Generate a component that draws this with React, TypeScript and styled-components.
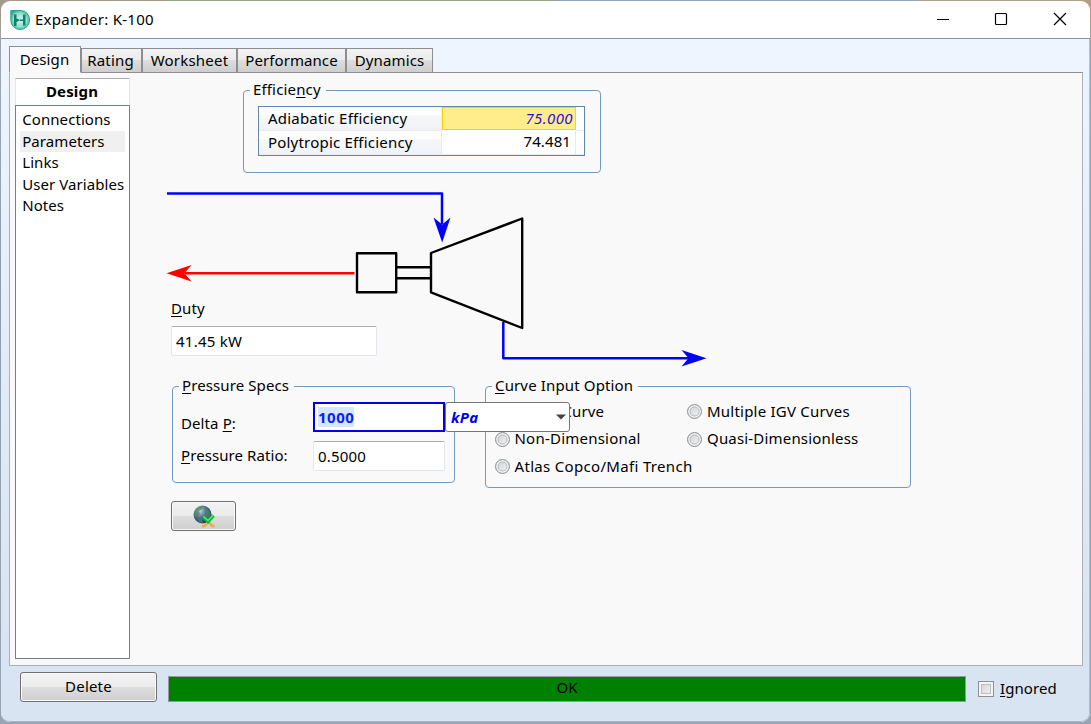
import React from "react";
import styled, { createGlobalStyle } from "styled-components";

const Global = createGlobalStyle`
  *, *::before, *::after { box-sizing: border-box; }
  html, body { margin: 0; padding: 0; overflow: hidden; }
  body { font-family: "Noto Sans", "Open Sans", sans-serif; font-size: 15px; line-height: 22px; color: #000; }
  u { text-underline-offset: 2px; text-decoration-thickness: 1px; text-decoration-skip-ink: none; }
`;

const Desktop = styled.div`
  width: 1091px;
  height: 724px;
  padding: 1px 1px 2px 1px;
  background:
    linear-gradient(90deg, #a39a8c 0 170px, #93a68c 170px 558px, #8fa6bd 558px 917px, #b3a08c 917px) top / 100% 20px no-repeat,
    linear-gradient(#a49a85 0, #9ba6b8 60px, #8f9cb0 300px, #98a4b4 100%);
`;

const Window = styled.div`
  display: flex;
  flex-direction: column;
  height: 721px;
  border-radius: 9px;
  overflow: hidden;
  background: #fff;
`;

const TitleBar = styled.header`
  display: flex;
  align-items: center;
  height: 38px;
  flex: none;
  padding: 0 22px 1px 9px;
  border-bottom: 1px solid #8b96a5;
  > svg { margin-top: 1px; }
`;

const Text = styled.span<{ $ls?: number }>`
  letter-spacing: ${(p) => p.$ls ?? 0}px;
  white-space: nowrap;
`;

const Title = styled(Text)`
  flex: 1;
  margin-left: 5px;
  padding-bottom: 1px;
`;

const WindowButtons = styled.div`
  display: flex;
  gap: 44px;
  svg { display: block; }
`;

const Body = styled.div`
  flex: 1;
  display: flex;
  flex-direction: column;
  padding: 6px 7px 0 8px;
  border-right: 1px solid #b4bfcc;
  border-bottom: 1px solid #aab6c5;
  border-radius: 0 0 9px 9px;
  background: linear-gradient(#eef5fe, #d8e4f1 90%);
`;

const Tabs = styled.nav`
  display: flex;
  align-items: flex-end;
  height: 28px;
  margin-bottom: -1px;
  z-index: 1;
`;

const Tab = styled.div<{ $w: number; $active?: boolean }>`
  width: ${(p) => p.$w}px;
  height: ${(p) => (p.$active ? 27 : 25)}px;
  flex: none;
  display: flex;
  justify-content: center;
  align-items: center;
  padding-bottom: ${(p) => (p.$active ? 2 : 1)}px;
  border: 1px solid #8c8e94;
  border-bottom-color: ${(p) => (p.$active ? "#f9f9f9" : "#8c8e94")};
  background: ${(p) =>
    p.$active ? "#f9f9f9" : "linear-gradient(#f2f2f2, #ebebeb 50%, #dddddd 50%, #cecece)"};
  &:nth-child(1) { padding-right: 1px; }
  &:nth-child(2) { padding-right: 2px; }
`;

const Panel = styled.main`
  display: flex;
  width: 1074px;
  height: 594px;
  flex: none;
  padding: 5px 0 0 5px;
  border: 1px solid #a9b0b9;
  border-top-color: #8c8e94;
  background: #f9f9f9;
`;

const Sidebar = styled.aside`
  width: 115px;
  height: 581px;
  display: flex;
  flex-direction: column;
`;

const SideHead = styled.div`
  height: 27px;
  padding: 1px 1px 0 0;
  text-align: center;
  font-weight: 700;
  letter-spacing: 0.15px;
  background: #fff;
  border: 1px solid #e2e6ed;
  border-top-color: #abadb3;
  border-bottom: 0;
`;

const SideList = styled.div`
  flex: 1;
  padding: 3px 4px;
  background: #fff;
  border: 1px solid #6d8096;
`;

const SideItem = styled.div<{ $on?: boolean }>`
  height: 21.5px;
  line-height: 20px;
  padding-left: 2.2px;
  white-space: nowrap;
  letter-spacing: 0.08px;
  background: ${(p) => (p.$on ? "#f0f0f0" : "transparent")};
`;

const Content = styled.section`
  flex: 1;
  padding: 1px 0 0 36px;
`;

const Group = styled.fieldset<{ $w: number; $h: number }>`
  width: ${(p) => p.$w}px;
  height: ${(p) => p.$h}px;
  min-width: 0;
  margin: 0;
  padding: 0 0 0 7px;
  border: 1px solid #7399bf;
  border-radius: 4px;
  legend {
    height: 22px;
    line-height: 20px;
    padding: 0 5px 0 3px;
    margin-left: -1px;
    white-space: nowrap;
  }
`;

const EfficiencyGroup = styled(Group)`
  margin-left: 77px;
`;

const Grid = styled.div`
  width: 327px;
  height: 50px;
  margin: 5px 0 0 7px;
  display: grid;
  grid-template-columns: 183px 134px 1fr;
  grid-template-rows: 24px 24px;
  border: 1px solid #5f87ae;
  background: #fff;
`;

const Cell = styled.div<{ $kind: "label" | "spec" | "value" | "rest" }>`
  border-right: ${(p) => (p.$kind === "spec" || p.$kind === "rest" ? 0 : "1px solid #e9e9ee")};
  border-bottom: 1px solid #ececf0;
  line-height: 22px;
  white-space: nowrap;
  ${(p) => p.$kind === "label" && "padding-left: 9px; background: linear-gradient(#fff 0 35%, #f7f8fa 36%, #f1f2f5);"}
  ${(p) => p.$kind === "value" && "text-align: right; padding-right: 4px; line-height: 20px;"}
  ${(p) =>
    p.$kind === "spec" &&
    "height: 23px; border: 1px solid #ffd400; background: #ffec8b; color: #2a10e0; font-style: italic; text-align: right; padding-right: 2px; line-height: 21px;"}
`;

const Stage = styled.div`
  display: grid;
  height: 202px;
  svg, > div { grid-area: 1 / 1; }
`;

const Duty = styled.div`
  align-self: end;
  justify-self: start;
  margin: 0 0 19px 5px;
  display: flex;
  flex-direction: column;
  gap: 7px;
`;

const Field = styled.div<{ $w: number }>`
  width: ${(p) => p.$w}px;
  height: 30px;
  padding-left: 4px;
  line-height: 29px;
  background: #fff;
  border: 1px solid #e2e6ed;
  border-top-color: #abadb3;
  border-radius: 2px;
`;

const FocusField = styled(Field)`
  border: 1px solid #0000dd;
  outline: 1px solid #0000ee;
  outline-offset: -2px;
  border-radius: 0;
  color: #0a1eff;
  font-weight: 700;
  letter-spacing: 0.5px;
  flex: none;
  display: flex;
  align-items: center;
  line-height: 20px;
`;

const Selected = styled.span`
  background: #d3e8fc;
`;

const Groups = styled.div`
  display: flex;
  gap: 30px;
  padding-left: 6px;
`;

const SpecRow = styled.div<{ $top: number }>`
  display: flex;
  align-items: center;
  height: 30px;
  margin-top: ${(p) => p.$top}px;
`;

const SpecLabel = styled.label<{ $drop?: number }>`
  width: 133px;
  flex: none;
  white-space: nowrap;
  padding: ${(p) => p.$drop ?? 0}px 0 2px 1px;
`;

const UnitBox = styled.div`
  position: relative;
  z-index: 2;
  width: 125px;
  height: 30px;
  flex: none;
  display: flex;
  align-items: center;
  justify-content: space-between;
  padding: 0 3px 0 5px;
  background: #fff;
  border: 1px solid #777;
  border-radius: 3px;
  color: #0000f0;
  font-weight: 700;
  font-style: italic;
`;

const Radios = styled.div`
  display: grid;
  grid-template-columns: 192.5px 1fr;
  grid-auto-rows: 27.5px;
  align-items: center;
  padding: 1px 0 0 1.5px;
`;

const Radio = styled.div`
  display: flex;
  align-items: center;
  gap: 5px;
  white-space: nowrap;
  ${Text} { padding-bottom: 2px; }
  &::before {
    content: "";
    flex: none;
    width: 15px;
    height: 15px;
    border-radius: 50%;
    border: 1px solid #8e8f8f;
    background: linear-gradient(135deg, #cbcfd5, #f6f6f6);
    box-shadow: inset 0 0 0 1.5px #f4f4f4, inset 0 0 0 2.5px #b4b8bd;
  }
`;

const Button = styled.button<{ $w: number }>`
  width: ${(p) => p.$w}px;
  height: 30px;
  flex: none;
  padding: 0;
  display: flex;
  align-items: center;
  justify-content: center;
  font: inherit;
  color: #000;
  border: 1px solid #707070;
  border-radius: 3px;
  box-shadow: inset 0 0 0 1px #fafafa;
  background: linear-gradient(#f2f2f2, #ebebeb 50%, #dddddd 50%, #cfcfcf);
  ${Text} { padding-bottom: 2px; }
`;

const WebButton = styled(Button)`
  margin: 13px 0 0 5px;
`;

const Footer = styled.footer`
  display: flex;
  padding: 6px 0 0 11px;
`;

const Status = styled.div`
  width: 798px;
  height: 26px;
  margin: 4px 12px 0 11px;
  text-align: center;
  line-height: 21px;
  background: #008000;
  border: 1px solid #8e9c9c;
`;

const Check = styled.label`
  display: flex;
  align-items: center;
  gap: 6px;
  height: 34px;
  ${Text} { padding-bottom: 2px; }
  &::before {
    content: "";
    flex: none;
    width: 16px;
    height: 16px;
    border: 1px solid #8e8f8f;
    background: linear-gradient(135deg, #cbcfd5, #f6f6f6);
    box-shadow: inset 0 0 0 2px #f4f4f4, inset 0 0 0 3px #bcc0c6;
  }
`;

const Logo = () => (
  <svg width="20" height="20" viewBox="0 0 20 20">
    <defs>
      <radialGradient id="logo" cx=".5" cy=".5" r=".55">
        <stop offset="0" stopColor="#d2f8ee" />
        <stop offset=".65" stopColor="#8fdfcb" />
        <stop offset="1" stopColor="#35b198" />
      </radialGradient>
    </defs>
    <path d="M.8.5H11A9 9 0 0 1 19.500 10A9.300 9.300 0 0 1 10 19.500A9.300 9.300 0 0 1 .8 10Z" fill="url(#logo)" stroke="#23a58b" />
    <path d="M4 4.500h2.500v4l4 1.500-4 2v4H4ZM13 4.500h2.500v11H13v-4.500h-3v-1.500h3Z" fill="#11806e" />
  </svg>
);

const Globe = () => (
  <svg width="22" height="23" viewBox="0 0 22 23">
    <defs>
      <radialGradient id="globe" cx=".35" cy=".3" r=".75">
        <stop offset="0" stopColor="#c3d2e6" />
        <stop offset=".5" stopColor="#4d6a9f" />
        <stop offset="1" stopColor="#1c3060" />
      </radialGradient>
    </defs>
    <circle cx="9.500" cy="9.500" r="9" fill="url(#globe)" />
    <path d="M2 6C4 2 7 1 10 1L9 4 6 6 7 9 4 12 1 10ZM12 3l4 2 2 5-3 4-3-3 1-3-2-2ZM5 13l4 1 1 4-4-1Z" fill="#4b8b48" opacity=".7" />
    <path d="M9 21.500l3-.8 3.500-4 3.500 4 2.500.8" fill="none" stroke="#e5af43" strokeWidth="2.600" />
    <path d="M10 11.500l5 5 5.500-6" fill="none" stroke="#08b93b" strokeWidth="3.400" />
    <path d="M10.500 11.500l4.500 4 5-5" fill="none" stroke="#5cf27c" strokeWidth="1.100" />
  </svg>
);

const Diagram = () => (
  <svg width="560" height="202" viewBox="166 173 560 202" fill="none" strokeLinejoin="round">
    <g stroke="#0000ff" strokeWidth="2.500">
      <path d="M167 193.500H442V224" />
      <path d="M503.300 322V358.300H690" />
    </g>
    <path d="M433.500 217.500L442.200 224.500L450.500 217.500L442.200 242.500Z" fill="#00f" />
    <path d="M681.500 350L706.500 358.300L681.500 366.500L688.500 358.300Z" fill="#00f" />
    <path d="M185 273.300H354.500" stroke="#f00" strokeWidth="2.500" />
    <path d="M191.500 265L166.500 273.300L191.500 281.500L184.500 273.300Z" fill="#f00" />
    <g stroke="#000" strokeWidth="2.400">
      <path d="M357 253.300H396.200V292.300H357Z" />
      <path d="M396.500 267.300H431M396.500 278.300H431" />
      <path d="M431 253L522.200 218.500V328L431 292.300Z" />
    </g>
  </svg>
);

export default function App() {
  return (
    <Desktop>
      <Global />
      <Window>
        <TitleBar>
          <Logo />
          <Title $ls={0.27}>Expander: K-100</Title>
          <WindowButtons>
            <svg width="14" height="14"><path d="M1 7.500h12" stroke="#000" /></svg>
            <svg width="14" height="14"><rect x="1.500" y="1.500" width="11" height="11" rx="1" fill="none" stroke="#000" strokeWidth="1.200" /></svg>
            <svg width="16" height="14"><path d="M2 1l12 12M14 1L2 13" stroke="#000" strokeWidth="1.200" /></svg>
          </WindowButtons>
        </TitleBar>
        <Body>
          <Tabs>
            <Tab $w={72} $active><Text $ls={0.1}>Design</Text></Tab>
            <Tab $w={61}><Text $ls={0.2}>Rating</Text></Tab>
            <Tab $w={95}><Text $ls={0.2}>Worksheet</Text></Tab>
            <Tab $w={109}><Text $ls={0.08}>Performance</Text></Tab>
            <Tab $w={87}><Text $ls={0.12}>Dynamics</Text></Tab>
          </Tabs>
          <Panel>
            <Sidebar>
              <SideHead>Design</SideHead>
              <SideList>
                <SideItem>Connections</SideItem>
                <SideItem $on>Parameters</SideItem>
                <SideItem>Links</SideItem>
                <SideItem>User Variables</SideItem>
                <SideItem>Notes</SideItem>
              </SideList>
            </Sidebar>
            <Content>
              <EfficiencyGroup $w={358} $h={94}>
                <legend><Text $ls={0.15}>Efficie<u>n</u>cy</Text></legend>
                <Grid>
                  <Cell $kind="label"><Text $ls={0.2}>Adiabatic Efficiency</Text></Cell>
                  <Cell $kind="spec"><Text $ls={0.4}>75.000</Text></Cell>
                  <Cell $kind="rest" />
                  <Cell $kind="label"><Text $ls={0.2}>Polytropic Efficiency</Text></Cell>
                  <Cell $kind="value"><Text $ls={0.1}>74.481</Text></Cell>
                  <Cell $kind="rest" />
                </Grid>
              </EfficiencyGroup>
              <Stage>
                <Diagram />
                <Duty>
                  <Text $ls={0.1}><u>D</u>uty</Text>
                  <Field $w={206}><Text $ls={0.25}>41.45 kW</Text></Field>
                </Duty>
              </Stage>
              <Groups>
                <Group $w={283} $h={108}>
                  <legend><Text $ls={0.1}><u>P</u>ressure Specs</Text></legend>
                  <SpecRow $top={5}>
                    <SpecLabel $drop={14}><Text $ls={0.1}>Delta <u>P</u>:</Text></SpecLabel>
                    <FocusField $w={132}><Selected>1000</Selected></FocusField>
                    <UnitBox>
                      <Text $ls={0.3}>kPa</Text>
                      <svg width="10" height="6"><path d="M0 .5h10L5 5.500Z" fill="#444" /></svg>
                    </UnitBox>
                  </SpecRow>
                  <SpecRow $top={9}>
                    <SpecLabel><Text $ls={0.08}><u>P</u>ressure Ratio:</Text></SpecLabel>
                    <Field $w={132}><Text $ls={0.2}>0.5000</Text></Field>
                  </SpecRow>
                </Group>
                <Group $w={426} $h={113}>
                  <legend><Text $ls={0.14}><u>C</u>urve Input Option</Text></legend>
                  <Radios>
                    <Radio><Text $ls={0.15}>Single Curve</Text></Radio>
                    <Radio><Text $ls={0.22}>Multiple IGV Curves</Text></Radio>
                    <Radio><Text $ls={0.22}>Non-Dimensional</Text></Radio>
                    <Radio><Text $ls={0.18}>Quasi-Dimensionless</Text></Radio>
                    <Radio><Text $ls={0.32}>Atlas Copco/Mafi Trench</Text></Radio>
                  </Radios>
                </Group>
              </Groups>
              <WebButton $w={65}><Globe /></WebButton>
            </Content>
          </Panel>
          <Footer>
            <Button $w={137}><Text $ls={0.2}>Delete</Text></Button>
            <Status>OK</Status>
            <Check><Text $ls={0.08}><u>I</u>gnored</Text></Check>
          </Footer>
        </Body>
      </Window>
    </Desktop>
  );
}
